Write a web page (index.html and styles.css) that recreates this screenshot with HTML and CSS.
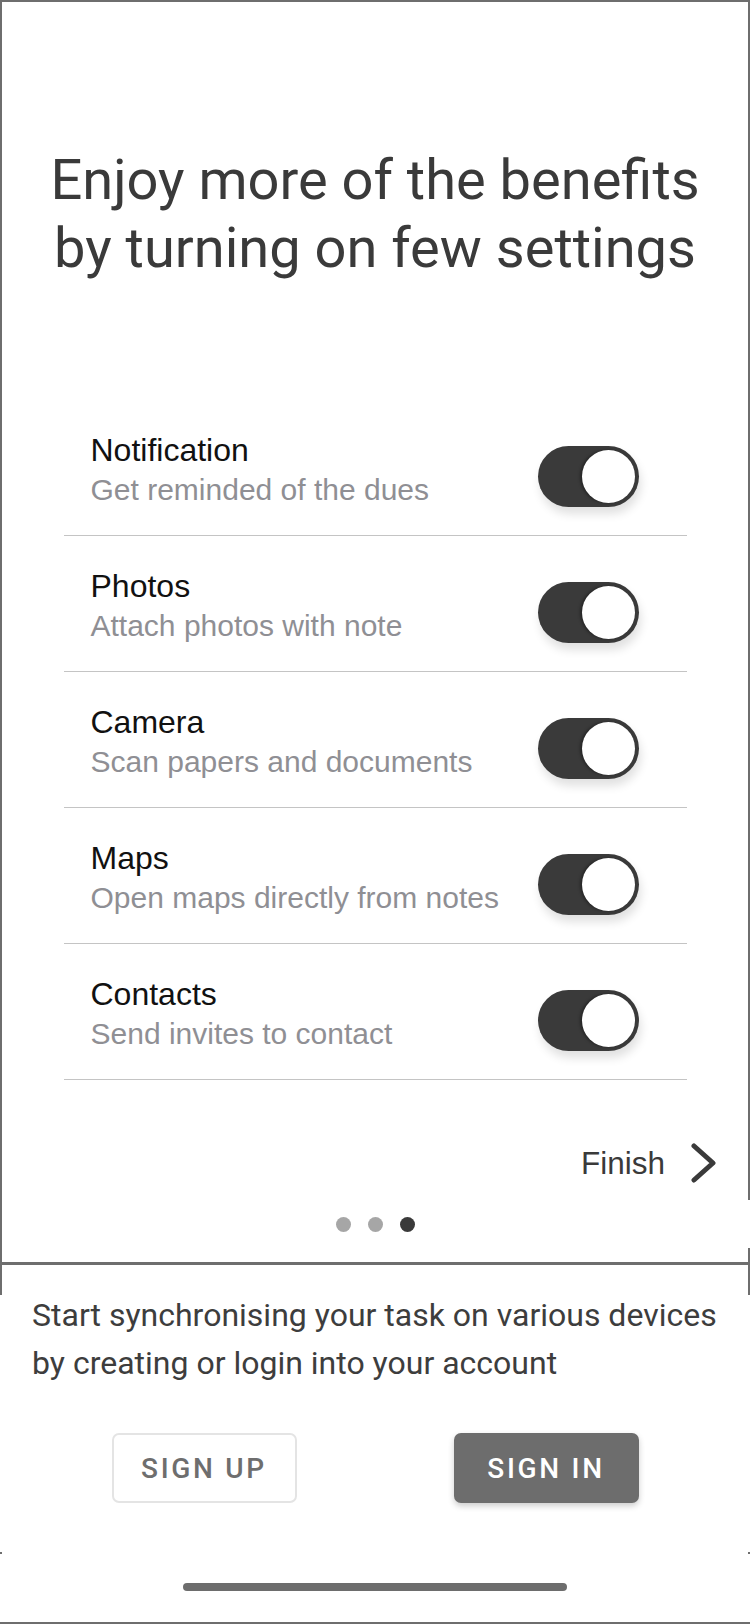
FILE: index.html
```html
<!DOCTYPE html>
<html lang="en">
<head>
  <meta charset="UTF-8">
  <meta name="viewport" content="width=device-width, initial-scale=1.0">
  <title>Settings</title>
  <link rel="stylesheet" href="styles.css">
</head>
<body>
  <div id="screen">
    <div id="onboarding">
      <h1 class="headline">Enjoy more of the benefits<br>by turning on few settings</h1>

      <ul class="settings">
        <li class="setting">
          <div class="setting-text">
            <div class="setting-name">Notification</div>
            <div class="setting-desc">Get reminded of the dues</div>
          </div>
          <span class="toggle"><span class="knob"></span></span>
        </li>
        <li class="setting">
          <div class="setting-text">
            <div class="setting-name">Photos</div>
            <div class="setting-desc">Attach photos with note</div>
          </div>
          <span class="toggle"><span class="knob"></span></span>
        </li>
        <li class="setting">
          <div class="setting-text">
            <div class="setting-name">Camera</div>
            <div class="setting-desc">Scan papers and documents</div>
          </div>
          <span class="toggle"><span class="knob"></span></span>
        </li>
        <li class="setting">
          <div class="setting-text">
            <div class="setting-name">Maps</div>
            <div class="setting-desc">Open maps directly from notes</div>
          </div>
          <span class="toggle"><span class="knob"></span></span>
        </li>
        <li class="setting">
          <div class="setting-text">
            <div class="setting-name">Contacts</div>
            <div class="setting-desc">Send invites to contact</div>
          </div>
          <span class="toggle"><span class="knob"></span></span>
        </li>
      </ul>

      <div class="finish-row">
        <span class="finish-label">Finish</span>
        <svg class="chevron" width="26" height="40" viewBox="0 0 26 40">
          <polyline points="3,3 22,20 3,37" fill="none" stroke="#3a3a3a" stroke-width="5" stroke-linecap="round" stroke-linejoin="round"/>
        </svg>
      </div>

      <div class="pager">
        <span class="dot"></span>
        <span class="dot"></span>
        <span class="dot active"></span>
      </div>
    </div>

    <!-- Account sheet -->
    <div id="account-sheet">
      <p class="sheet-text">Start synchronising your task on various devices by creating or login into your account</p>
      <div class="sheet-actions">
        <button class="btn btn-outline">SIGN UP</button>
        <button class="btn btn-filled">SIGN IN</button>
      </div>
      <div class="home-bar"></div>
    </div>
  </div>
</body>
</html>
```

FILE: styles.css
```css
body {
  margin: 0;
  padding: 0;
  background-color: #fff;
  font-family: Roboto, "Liberation Sans", Arial, sans-serif;
}
#screen {
  width: 750px;
  height: 1624px;
  display: flex;
  flex-direction: column;
}
#onboarding {
  box-sizing: border-box;
  height: 1265px;
  border-top: 2px solid #6e6e6e;
  border-left: 2px solid #6e6e6e;
  border-bottom: 3px solid #6e6e6e;
  padding: 144px 2px 0 0;
  display: flex;
  flex-direction: column;
  align-items: center;
  /* right edge has a small gap near the bottom */
  background: linear-gradient(to bottom, #6e6e6e 1198px, transparent 1198px, transparent 1246px, #6e6e6e 1246px) right top / 2px 100% no-repeat;
}
.headline {
  margin: 0;
  font-size: 56px;
  line-height: 68px;
  font-weight: 400;
  color: #3a3a3a;
  text-align: center;
}
.settings {
  list-style: none;
  margin: 118px 0 0;
  padding: 0;
  width: 623px;
}
.setting {
  box-sizing: border-box;
  height: 136px;
  display: flex;
  align-items: flex-start;
  padding: 31px 48px 0 27px;
  border-bottom: 1px solid #c4c4c4;
  font-family: "Liberation Sans", Arial, sans-serif;
}
.setting-text {
  flex: 1;
}
.setting-name {
  font-size: 32px;
  line-height: 39px;
  color: #111;
}
.setting-desc {
  font-size: 30px;
  line-height: 39px;
  color: #8f8f94;
}
.toggle {
  box-sizing: border-box;
  width: 101px;
  height: 61px;
  margin-top: 15px;
  padding: 4px;
  border-radius: 31px;
  background-color: #3a3a3a;
  display: flex;
  justify-content: flex-end;
  box-shadow: 2px 7px 10px rgba(0, 0, 0, 0.12);
}
.knob {
  width: 53px;
  height: 53px;
  border-radius: 50%;
  background-color: #fff;
  box-shadow: -2px 0 3px rgba(0, 0, 0, 0.35);
}
.finish-row {
  align-self: stretch;
  display: flex;
  justify-content: flex-end;
  align-items: center;
  gap: 26px;
  margin-top: 63px;
  padding-right: 31px;
  height: 40px;
}
.finish-label {
  font-family: "Liberation Sans", Arial, sans-serif;
  font-size: 31.5px;
  color: #3a3a3a;
}
.chevron {
  display: block;
}
.pager {
  display: flex;
  gap: 17px;
  margin-top: 34px;
}
.dot {
  width: 15px;
  height: 15px;
  border-radius: 50%;
  background-color: #a6a6a6;
}
.dot.active {
  background-color: #3a3a3a;
}
/* Account sheet */
#account-sheet {
  flex: 1;
  box-sizing: border-box;
  border-bottom: 2px solid #6e6e6e;
  padding: 26px 0 0 32px;
  display: flex;
  flex-direction: column;
  background:
    linear-gradient(#6e6e6e, #6e6e6e) left top / 2px 30px no-repeat,
    linear-gradient(#6e6e6e, #6e6e6e) right top / 2px 30px no-repeat,
    linear-gradient(#6e6e6e, #6e6e6e) left 0 top 287px / 2px 2px no-repeat,
    linear-gradient(#6e6e6e, #6e6e6e) right 0 top 287px / 2px 2px no-repeat;
}
.sheet-text {
  margin: 0;
  font-size: 32px;
  line-height: 48px;
  color: #3d3d3d;
  width: 700px;
}
.sheet-actions {
  display: flex;
  justify-content: center;
  gap: 157px;
  margin: 46px 0 0 -32px;
}
.btn {
  box-sizing: border-box;
  width: 185px;
  height: 70px;
  border-radius: 7px;
  font-family: Roboto, sans-serif;
  font-size: 28px;
  font-weight: 500;
  letter-spacing: 2.7px;
  cursor: pointer;
}
.btn-outline {
  background-color: #fff;
  border: 2px solid #e4e4e4;
  color: #6e6e6e;
}
.btn-filled {
  background-color: #6d6d6d;
  border: none;
  color: #fff;
  box-shadow: 0 3px 6px rgba(0, 0, 0, 0.2);
}
.home-bar {
  align-self: center;
  width: 384px;
  height: 8px;
  border-radius: 4px;
  background-color: #6d6d6d;
  margin: 80px 0 0 -32px;
}
```
